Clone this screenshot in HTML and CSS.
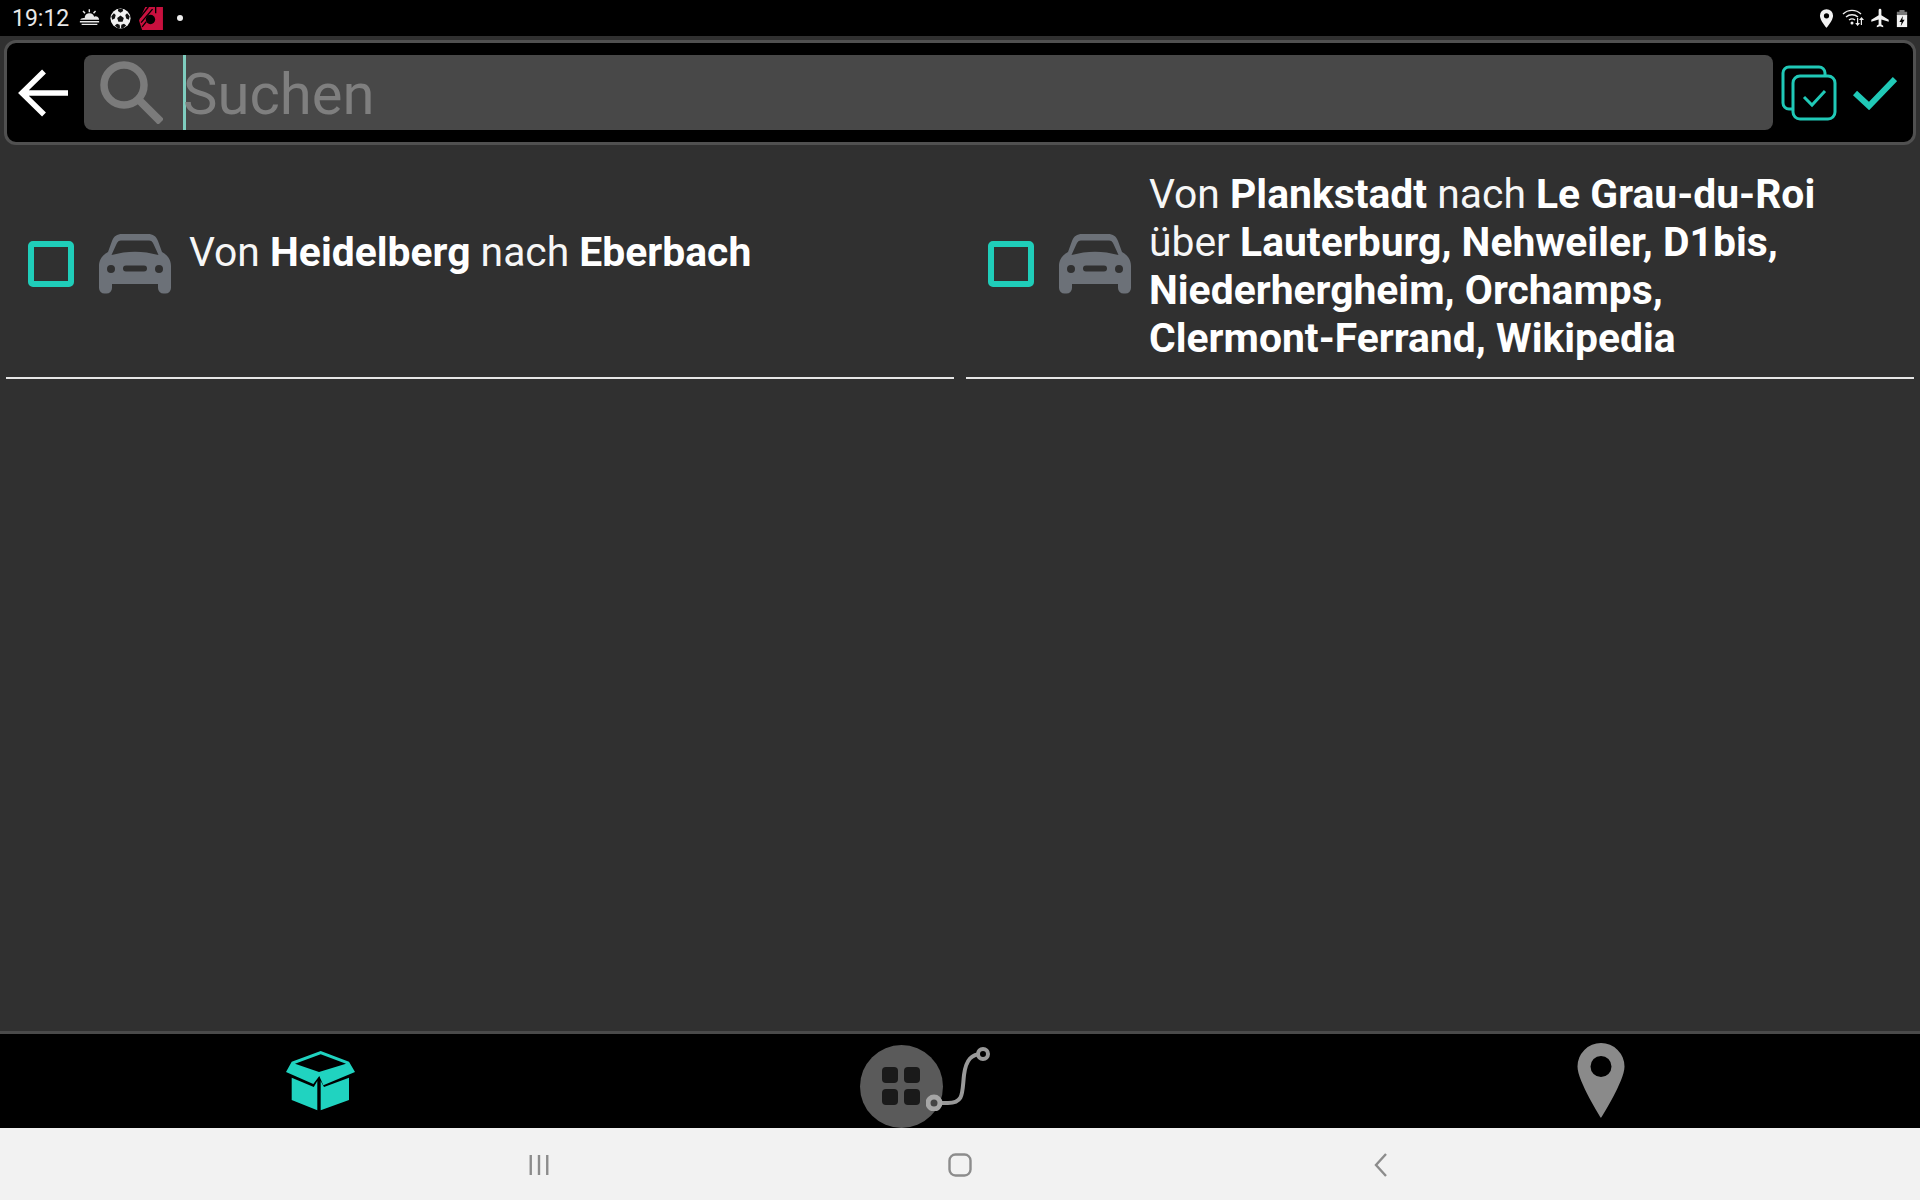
FILE: index.html
```html
<!DOCTYPE html>
<html lang="de">
<head>
    <meta charset="UTF-8">
    <title>Suchen</title>
    <link rel="stylesheet" href="styles.css">
</head>
<body>
    <div class="status-bar">
        <div class="status-left">
            <span class="clock">19:12</span>
            <svg class="st-weather" viewBox="0 0 24 20"><path fill="#e8e8e8" d="M11 0h1.600v3.500H11zM4 2.500l1.200-1 2.300 2.500-1.200 1zM19.500 2.500l-1.200-1L16 4l1.200 1zM6.500 10a5.500 5.500 0 0 1 10.800-1.500A4 4 0 0 1 23 12H1.500c.5-1.500 2.500-2.500 5-2zM1 13.500h22V15H1zM3 16.500h18V18H3z"/></svg>
            <svg class="st-ball" viewBox="0 0 24 24"><circle cx="12" cy="12" r="11.500" fill="#f2f2f2"/><path fill="#111" d="M12 8.500l3.800 2.800-1.400 4.400H9.600l-1.400-4.400zM9.500 1h5l.5 2.500-3 2-3-2zM1.500 9.500L4.500 6l2 2-1 4-3 1.500zM22.500 9.500L19.500 6l-2 2 1 4 3 1.500zM5.500 20l2.500-2 3 1 .5 3.500-2.500.5zM18.500 20L16 18l-3 1-.5 3.500 2.500.5z"/></svg>
            <svg class="st-app" viewBox="0 0 24 24"><path fill="#c8103e" d="M6 1h17v22H3L0 14z"/><circle cx="11" cy="13" r="4.500" fill="#000"/><path fill="none" stroke="#000" stroke-width="1.300" d="M1 11L9 1M2 16L13 3M3 20l4-5M16 1v6"/></svg>
            <span class="st-dot"></span>
        </div>
        <div class="status-right">
            <svg class="st-pin" viewBox="0 0 16 20"><path fill="#f2f2f2" fill-rule="evenodd" d="M8 0a7 7 0 0 1 7 7c0 5-7 13-7 13S1 12 1 7a7 7 0 0 1 7-7zm0 4.300a2.800 2.800 0 1 0 0 5.600 2.800 2.800 0 0 0 0-5.600z"/></svg>
            <svg class="st-wifi" viewBox="0 0 24 20"><g fill="none" stroke="#eee" stroke-width="1.400"><path d="M1 6a13 13 0 0 1 18 0M4 9a9 9 0 0 1 12 0M7 12a5 5 0 0 1 6 0"/></g><circle cx="10" cy="15" r="1.500" fill="#eee"/><path fill="#eee" d="M15 10h1.200v5H18l-2.400 3-2.400-3H15zM20 17h-1.200v-5H17l2.500-3 2.500 3h-2z"/></svg>
            <svg class="st-plane" viewBox="0 0 24 24"><path fill="#f2f2f2" d="M21 16v-2l-8-5V3.500a1.500 1.500 0 0 0-3 0V9l-8 5v2l8-2.500V19l-2 1.500V22l3.500-1 3.500 1v-1.500L13 19v-5.500z" transform="translate(.5)"/></svg>
            <svg class="st-battery" viewBox="0 0 14 20"><path fill="#777" d="M4 0h6v2h3v5H1V2h3z"/><path fill="#f2f2f2" d="M1 6h12v14H1z"/><path fill="#000" d="M8 7L4 14h2.500L5.500 19 10 11.500H7.500z"/></svg>
        </div>
    </div>

    <div class="toolbar">
        <svg class="back-icon" viewBox="0 0 50 48"><path fill="none" stroke="#fff" stroke-width="5.500" d="M26 2.500L4 24l22 21.500M4 24h46"/></svg>
        <div class="search-box">
            <svg class="search-icon" viewBox="0 0 64 64"><circle cx="25" cy="25" r="20" fill="none" stroke="#7b7b7b" stroke-width="7.500"/><path fill="none" stroke="#7b7b7b" stroke-width="8" d="M40 40l22 22"/></svg>
            <div class="caret"></div>
            <span class="search-placeholder">Suchen</span>
        </div>
        <svg class="select-all-icon" viewBox="0 0 56 56"><g fill="none" stroke="#20c9b7" stroke-width="3"><path d="M11 44H8a6 6 0 0 1-6-6V8a6 6 0 0 1 6-6h30a6 6 0 0 1 6 6v3"/><rect x="12" y="11" width="42" height="43" rx="7" fill="#000"/><path d="M23 32l8 8 13-14"/></g></svg>
        <svg class="confirm-icon" viewBox="0 0 44 34"><path fill="none" stroke="#20c9b7" stroke-width="6" d="M2 17l14 13L42 3"/></svg>
    </div>

    <div class="main">
        <div class="route-list">
            <div class="route-item">
                <div class="checkbox"></div>
                <svg class="car-icon" viewBox="0 0 74 60"><use href="#car"/></svg>
                <div class="route-text route-text-short">Von <b>Heidelberg</b> nach <b>Eberbach</b></div>
            </div>
            <div class="route-item">
                <div class="checkbox"></div>
                <svg class="car-icon" viewBox="0 0 74 60"><use href="#car"/></svg>
                <div class="route-text">Von <b>Plankstadt</b> nach <b>Le Grau-du-Roi</b><br>über <b>Lauterburg, Nehweiler, D1bis,</b><br><b>Niederhergheim, Orchamps,</b><br><b>Clermont-Ferrand, Wikipedia</b></div>
            </div>
        </div>
    </div>

    <div class="tab-bar">
        <div class="tab">
            <svg class="box-icon" viewBox="0 0 69 60"><path fill="#20d3c0" fill-rule="evenodd" d="M34.700 0L63 10.700 69 21 37.300 34.300l-4-9.300-6 8L0 21l5.700-10.300zM34.700 3.300L9 12.700 33 21l27-8.300z"/><path fill="#20d3c0" d="M5.700 26.700L27.800 36l3.500-6v29.300L5.700 49zM34.700 30l3.300 6 25-9.300V49L34.700 59.300z"/></svg>
        </div>
        <div class="tab">
            <div class="route-button">
                <div class="grid-circle">
                    <span></span><span></span><span></span><span></span>
                </div>
                <svg class="route-curve" viewBox="0 0 66 66"><path fill="none" stroke="#999" stroke-width="4" d="M8 58h14c16 0 14-10 16-28 2-16 8-21 18-21"/><circle cx="57" cy="9" r="5" fill="#000" stroke="#999" stroke-width="4"/><circle cx="8" cy="58" r="6" fill="#444" stroke="#a6a6a6" stroke-width="5"/></svg>
            </div>
        </div>
        <div class="tab">
            <svg class="pin-icon" viewBox="0 0 48 76"><path fill="#8a8a8a" fill-rule="evenodd" d="M24 0a23.500 23.500 0 0 1 23.500 23.500C47.500 38 24 75 24 75S.5 38 .5 23.500A23.500 23.500 0 0 1 24 0zm0 13a10.500 10.500 0 1 0 0 21 10.500 10.500 0 0 0 0-21z"/></svg>
        </div>
    </div>

    <div class="nav-bar">
        <svg class="nav-recent" viewBox="0 0 24 24"><path fill="none" stroke="#8c8c8c" stroke-width="2.600" d="M3 1v22M12 1v22M21 1v22"/></svg>
        <svg class="nav-home" viewBox="0 0 24 24"><rect x="1.500" y="1.500" width="21" height="21" rx="6" fill="none" stroke="#8c8c8c" stroke-width="2.400"/></svg>
        <svg class="nav-back" viewBox="0 0 14 24"><path fill="none" stroke="#8c8c8c" stroke-width="2.400" d="M12 1L2 12l10 11"/></svg>
    </div>

    <svg class="svg-defs" width="0" height="0">
        <symbol id="car" viewBox="0 0 74 60">
            <path fill="#6c7178" fill-rule="evenodd" d="M24 0h26c5 0 8 2 10 7l4 11c5 3 9 7 9 14v22a5.500 5.500 0 0 1-5.500 5.500h-2a5.500 5.500 0 0 1-5.500-5.500v-4H14v4a5.500 5.500 0 0 1-5.500 5.500h-2A5.500 5.500 0 0 1 1 54V32c0-7 4-11 9-14l4-11c2-5 5-7 10-7zm-1 6.500c-2 0-3.500 1-4.500 3.500L13.500 21c16-4.500 31-4.500 47 0L55.500 10c-1-2.500-2.500-3.500-4.500-3.500zM13 31a4 4 0 1 0 0 8 4 4 0 0 0 0-8zm48 0a4 4 0 1 0 0 8 4 4 0 0 0 0-8zM28 31.500a3 3 0 0 0 0 6h18a3 3 0 0 0 0-6z"/>
        </symbol>
    </svg>
</body>
</html>
```

FILE: styles.css
```css
* {
    box-sizing: border-box;
}

html, body {
    margin: 0;
    padding: 0;
}

body {
    width: 1920px;
    height: 1200px;
    display: flex;
    flex-direction: column;
    overflow: hidden;
    background: #303030;
    color: #fff;
    font-family: Roboto, "Liberation Sans", sans-serif;
}

.svg-defs {
    display: none;
}

.status-bar {
    height: 36px;
    flex-shrink: 0;
    background: #000;
    display: flex;
    justify-content: space-between;
    align-items: center;
    padding: 0 12px;
}

.status-left, .status-right {
    display: flex;
    align-items: center;
}

.clock {
    font-size: 23px;
    color: #e8e8e8;
    margin-right: 10px;
}

.st-weather { width: 21px; height: 18px; margin-right: 10px; }
.st-ball { width: 21px; height: 21px; margin-right: 8px; }
.st-app { width: 25px; height: 25px; margin-right: 13px; }

.st-dot {
    width: 6px;
    height: 6px;
    border-radius: 50%;
    background: #eee;
}

.st-pin { width: 15px; height: 19px; margin-right: 8px; }
.st-wifi { width: 24px; height: 20px; margin-right: 3px; }
.st-plane { width: 22px; height: 22px; margin-right: 5px; }
.st-battery { width: 12px; height: 19px; }

.toolbar {
    height: 105px;
    flex-shrink: 0;
    margin: 4px 4px 0;
    display: flex;
    align-items: center;
    padding: 0 16px 0 11px;
    background: #000;
    border: 3px solid #505050;
    border-radius: 12px;
}

.back-icon {
    width: 50px;
    height: 48px;
    flex-shrink: 0;
    margin-right: 16px;
}

.search-box {
    flex: 1;
    height: 75px;
    display: flex;
    align-items: stretch;
    background: #484848;
    border-radius: 8px;
    margin-right: 8px;
    padding-left: 15px;
}

.search-icon {
    width: 64px;
    height: 64px;
    align-self: center;
    margin-top: -2px;
    margin-right: 20px;
}

.caret {
    width: 3px;
    background: #7fcdbf;
}

.search-placeholder {
    font-size: 58px;
    line-height: 79px;
    color: #7f7f7f;
    margin-left: -3px;
}

.select-all-icon {
    width: 56px;
    height: 56px;
    flex-shrink: 0;
    margin-right: 16px;
}

.confirm-icon {
    width: 44px;
    height: 34px;
    flex-shrink: 0;
}

.main {
    flex: 1;
    padding: 0 6px;
}

.route-list {
    display: grid;
    grid-template-columns: 1fr 1fr;
    column-gap: 12px;
}

.route-item {
    height: 234px;
    display: flex;
    align-items: center;
    padding-left: 22px;
    padding-top: 6px;
    border-bottom: 2px solid #e6e6e6;
}

.checkbox {
    width: 46px;
    height: 46px;
    flex-shrink: 0;
    border: 6px solid #1fcdb9;
    border-radius: 5px;
    margin-right: 24px;
}

.car-icon {
    width: 74px;
    height: 60px;
    flex-shrink: 0;
    margin-right: 17px;
}

.route-text {
    font-size: 40.85px;
    line-height: 48px;
    color: #f6f6f6;
    margin-top: 3px;
}

.route-text-short {
    margin-top: 0;
    margin-bottom: 25px;
}

.route-text b {
    font-weight: 700;
    color: #fff;
}

.tab-bar {
    height: 97px;
    flex-shrink: 0;
    display: grid;
    grid-template-columns: 640px 640px 640px;
    background: #000;
    border-top: 3px solid #4a4a4a;
}

.tab {
    display: flex;
    align-items: center;
    justify-content: center;
}

.box-icon {
    width: 69px;
    height: 60px;
}

.route-button {
    position: relative;
    width: 132px;
    height: 93px;
    margin-right: 69px;
}

.grid-circle {
    width: 83px;
    height: 83px;
    margin-top: 10px;
    border-radius: 50%;
    background: #5a5a5a;
    display: grid;
    grid-template-columns: 16px 16px;
    grid-auto-rows: 16px;
    gap: 6px;
    align-content: center;
    justify-content: center;
}

.grid-circle span {
    background: #1a1a1a;
    border-radius: 4px;
}

.route-curve {
    position: absolute;
    left: 66px;
    top: 10px;
    width: 66px;
    height: 66px;
}

.pin-icon {
    width: 48px;
    height: 76px;
    margin-left: 2px;
}

.nav-bar {
    height: 72px;
    flex-shrink: 0;
    background: #f2f2f2;
    display: grid;
    grid-template-columns: 421px 421px 421px;
    justify-content: center;
    justify-items: center;
    align-items: center;
    padding-top: 2px;
}

.nav-bar svg {
    display: block;
}

.nav-recent { width: 22px; height: 24px; }
.nav-home { width: 24px; height: 24px; }
.nav-back { width: 14px; height: 24px; }
```
